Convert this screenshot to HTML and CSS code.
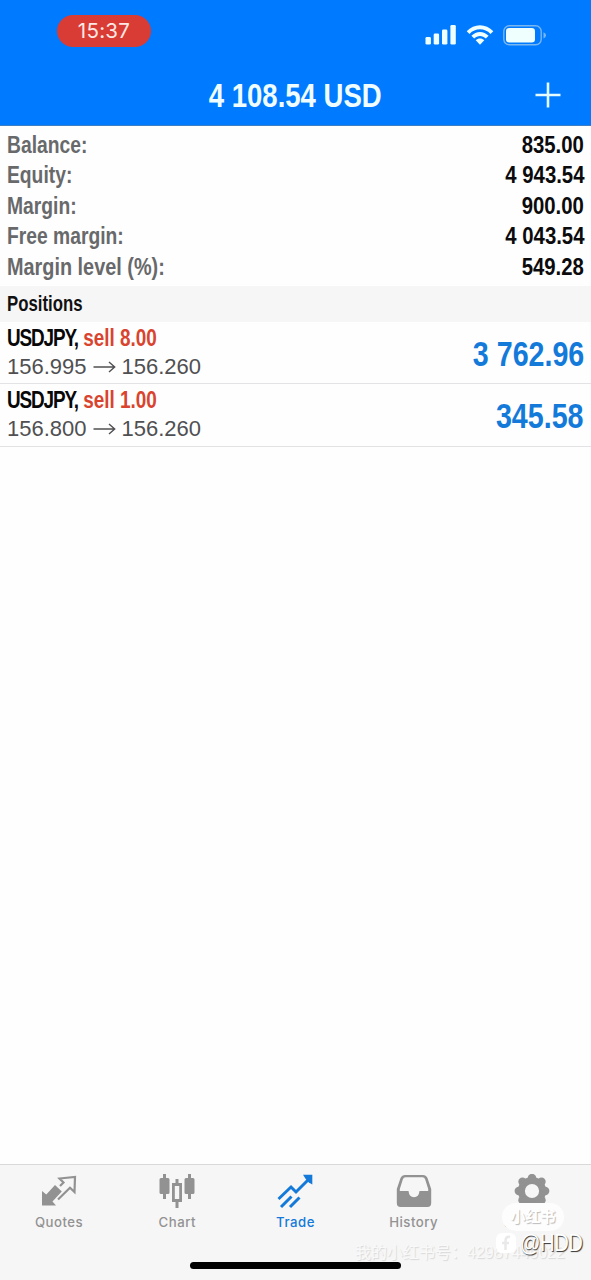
FILE: index.html
```html
<!DOCTYPE html>
<html lang="en">
<head>
<meta charset="utf-8">
<title>Trade</title>
<link rel="stylesheet" href="styles.css">
</head>
<body>
<div class="screen">
  <header class="header">
    <div class="status">
      <span class="clock">15:37</span>
      <div class="indicators">
        <svg class="signal" width="32" height="20" viewBox="0 0 32 20"><rect x="0.500" y="12" width="5.400" height="7.500" rx="1.300"/><rect x="8.700" y="8.500" width="5.400" height="11" rx="1.300"/><rect x="17" y="4.500" width="5.400" height="15" rx="1.300"/><rect x="25.400" y="0" width="5.400" height="19.500" rx="1.300"/></svg>
        <svg class="wifi" width="28" height="20" viewBox="0 0 28 20"><path d="M.7 6.2C8-1.800 20-1.800 27.300 6.200L24.500 9C18.800 2.800 9.200 2.800 3.500 9Z"/><path d="M5.400 10.800C10.300 5.600 17.700 5.600 22.600 10.800L19.800 13.600C16.600 10.200 11.400 10.200 8.200 13.600Z"/><path d="M9.700 15.200C12.200 12.900 15.800 12.900 18.300 15.200L14 19.700Z"/></svg>
        <svg class="battery" width="44" height="21" viewBox="0 0 44 21"><rect class="shell" x=".8" y=".8" width="37.400" height="19" rx="5.500"/><rect x="3" y="3" width="29" height="14.600" rx="3.300"/><path class="cap" d="M40.500 7.200Q43 8 43 10.300T40.500 13.500Z"/></svg>
      </div>
    </div>
    <div class="titlebar">
      <h1 class="title condensed">4 108.54 USD</h1>
      <svg class="plus" width="26" height="26" viewBox="0 0 26 26"><path d="M13 .5V25.500M.5 13H25.500"/></svg>
    </div>
  </header>

  <main class="content">
    <dl class="account">
      <div class="account-row"><dt class="condensed">Balance:</dt><dd class="condensed">835.00</dd></div>
      <div class="account-row"><dt class="condensed">Equity:</dt><dd class="condensed">4 943.54</dd></div>
      <div class="account-row"><dt class="condensed">Margin:</dt><dd class="condensed">900.00</dd></div>
      <div class="account-row"><dt class="condensed">Free margin:</dt><dd class="condensed">4 043.54</dd></div>
      <div class="account-row"><dt class="condensed wide">Margin level (%):</dt><dd class="condensed">549.28</dd></div>
    </dl>
    <h2 class="section"><span class="condensed">Positions</span></h2>
    <div class="position">
      <div class="order">
        <div class="deal condensed"><span class="symbol">USDJPY,</span> <span class="sell">sell 8.00</span></div>
        <div class="prices"><span>156.995</span><svg width="23" height="12" viewBox="0 0 23 12"><path d="M.5 6H21.500M16 1L21.700 6L16 11"/></svg><span>156.260</span></div>
      </div>
      <div class="profit condensed">3 762.96</div>
    </div>
    <div class="position">
      <div class="order">
        <div class="deal condensed"><span class="symbol">USDJPY,</span> <span class="sell">sell 1.00</span></div>
        <div class="prices"><span>156.800</span><svg width="23" height="12" viewBox="0 0 23 12"><path d="M.5 6H21.500M16 1L21.700 6L16 11"/></svg><span>156.260</span></div>
      </div>
      <div class="profit condensed">345.58</div>
    </div>
  </main>

  <footer class="footer">
    <nav class="tabs">
      <div class="tab">
        <svg width="36" height="36" viewBox="0 0 36 36"><path class="fill" d="M1 17L5.300 20.500L14 11L20.800 17.500L11.500 27.500L15 31.500H1Z"/><path class="line" d="M17 25.500L29 13.800L33.500 18L34 3L18.500 4.500L22.500 8.500L19 12"/></svg>
        <span>Quotes</span>
      </div>
      <div class="tab">
        <svg width="36" height="36" viewBox="0 0 36 36"><path class="fill" d="M4 0H7V4H9Q10.500 4 10.500 5.500V18.500Q10.500 20 9 20H7V25H4V20H2Q.5 20 .5 18.500V5.500Q.5 4 2 4H4ZM29 0H32V4H34Q35.500 4 35.500 5.500V18.500Q35.500 20 34 20H32V25H29V20H27Q25.500 20 25.500 18.500V5.500Q25.500 4 27 4H29Z"/><path class="fill" fill-rule="evenodd" d="M16.500 5H19.500V9H23V28H19.500V34H16.500V28H13V9H16.500ZM15.800 12V25H20.200V12Z"/></svg>
        <span>Chart</span>
      </div>
      <div class="tab active">
        <svg width="36" height="36" viewBox="0 0 36 36"><path class="thick" d="M1.500 25L14 13L19 18L32 5"/><path class="thick" d="M4 33L14.500 22.500M13 33L22.500 23.500"/><path class="fill" d="M26 .8H35.300V10.500L31.800 8.500L28.500 4.800Z"/></svg>
        <span>Trade</span>
      </div>
      <div class="tab">
        <svg width="36" height="36" viewBox="0 0 36 36"><path class="fill" fill-rule="evenodd" d="M9 1H27Q30 1 31.500 4L35.200 15V29Q35.200 33 31.500 33H4.500Q.8 33 .8 29V15L4.500 4Q6 1 9 1ZM9.500 3.300Q7.500 3.300 6.800 5.500L3.800 15V17H12.500Q13.200 23.200 18 23.200T23.500 17H32.200V15L29.200 5.500Q28.500 3.300 26.500 3.300Z"/></svg>
        <span>History</span>
      </div>
      <div class="tab">
        <svg width="36" height="36" viewBox="0 0 36 36"><circle class="ring" cx="18" cy="17" r="10.600"/><g class="fill"><circle cx="18" cy="4" r="4.200"/><circle cx="27.500" cy="7.800" r="4.200"/><circle cx="31.200" cy="17" r="4.200"/><circle cx="27.500" cy="26.200" r="4.200"/><circle cx="18" cy="30" r="4.200"/><circle cx="8.500" cy="26.200" r="4.200"/><circle cx="4.800" cy="17" r="4.200"/><circle cx="8.500" cy="7.800" r="4.200"/></g></svg>
        <span>Settings</span>
      </div>
    </nav>
    <div class="home-indicator"></div>
    <div class="account-mark">我的小红书号：42987440022</div>
    <div class="brand-mark">小红书</div>
    <div class="user-mark"><svg width="20" height="20" viewBox="0 0 20 20"><rect width="20" height="20" rx="6"/><path d="M14 4Q9.500 3 9.500 8V17M6 10H13"/></svg><span>@HDD</span></div>
  </footer>
</div>
</body>
</html>
```
FILE: styles.css
```css
* { box-sizing: border-box; }
body { margin: 0; background: #fff; font-family: "Liberation Sans", Arial, sans-serif; }
h1, h2, dl, dd { margin: 0; }
svg { display: block; flex: none; }

.screen { width: 591px; height: 1280px; display: flex; flex-direction: column; background: #fefefe; overflow: hidden; }
.condensed { font-weight: 700; white-space: nowrap; transform: scaleX(.82); transform-origin: left center; }

.header { height: 126px; background: #007aff; border-bottom: 1px solid #3c7fc4; flex: none; }
.status { height: 66px; padding: 15px 44px 0 57px; display: flex; justify-content: space-between; align-items: flex-start; }
.clock { width: 94px; height: 32px; border-radius: 16px; background: #d93c34; color: #ffe9e4; font: 400 20.500px/32px Inter, sans-serif; letter-spacing: .300px; text-align: center; }
.indicators { display: flex; gap: 9px; padding-top: 10px; fill: #effffe; }
.shell { fill: none; stroke: #79b6ef; stroke-width: 1.400; }
.cap { fill: #79b6ef; }
.titlebar { height: 60px; display: grid; grid-template-columns: 1fr auto 1fr; align-items: center; padding: 0 30px; }
.title { grid-column: 2; color: #effdff; font-size: 33.500px; line-height: 60px; transform: scaleX(.822); transform-origin: center; }
.plus { justify-self: end; fill: none; stroke: #e4fbff; stroke-width: 2.600; margin-top: -2px; }

.content { flex: 1; }
.account { height: 160px; padding: 4px 7px 0; }
.account-row { height: 30.400px; display: flex; justify-content: space-between; line-height: 30.400px; font-size: 23.500px; }
.account dt { color: #68696b; }
.account .wide { transform: scaleX(.845); }
.account dd { color: #0b0b0d; transform: scaleX(.865); transform-origin: right center; }
.section { height: 36px; padding: 0 7px; background: #f6f6f7; color: #111; font-size: 21.500px; line-height: 36px; }
.section .condensed { display: inline-block; transform: scaleX(.78); }
.position { height: 62.300px; padding: 0 7px; display: flex; justify-content: space-between; border-bottom: 1.500px solid #e3e3e5; }
.deal { font-size: 23.500px; line-height: 30px; margin-top: 1px; color: #080808; transform: scaleX(.805); }
.symbol { letter-spacing: -1.400px; }
.sell { color: #d9442f; }
.prices { display: flex; align-items: center; gap: 6px; color: #505052; font-size: 22px; line-height: 27px; }
.prices svg { fill: none; stroke: #505052; stroke-width: 1.400; }
.profit { color: #147ada; font-size: 34.500px; line-height: 65px; transform: scaleX(.83); transform-origin: right center; }

.footer { position: relative; height: 116px; background: #f6f6f6; border-top: 1px solid #d9d9da; flex: none; }
.tabs { display: grid; grid-template-columns: repeat(5, 1fr); padding-top: 9px; }
.tab { display: flex; flex-direction: column; align-items: center; gap: 4px; color: #929292; font: 500 13.200px/17px Inter, sans-serif; letter-spacing: .500px; }
.active { color: #147ada; }
.fill { fill: currentColor; }
.line { fill: none; stroke: currentColor; stroke-width: 2.200; }
.thick { fill: none; stroke: currentColor; stroke-width: 3; }
.ring { fill: none; stroke: currentColor; stroke-width: 7; }
.home-indicator { position: absolute; left: 190px; top: 97px; width: 211px; height: 7px; border-radius: 4px; background: #000; }
.account-mark { position: absolute; left: 355px; top: 77px; width: 215px; color: #f9f9f9; font: 16px/22px "Liberation Sans", "Noto Sans CJK SC", sans-serif; white-space: nowrap; text-shadow: 1px 1px 1px #d8d8d8; }
.brand-mark { position: absolute; left: 502px; top: 38px; width: 62px; height: 28px; border-radius: 14px; background: #fdfdfd; color: #fff; font: 700 15px/26px "Noto Sans CJK SC", sans-serif; text-align: center; text-shadow: 1px 1px 1px #bbb; }
.user-mark { position: absolute; left: 496px; top: 64px; display: flex; align-items: center; gap: 4px; color: #fff; font-size: 24px; line-height: 27px; text-shadow: 1px 1px 1px #333; }
.user-mark span { transform: scaleX(.84); transform-origin: left center; letter-spacing: -.500px; }
.user-mark rect { fill: #fff; }
.user-mark path { fill: none; stroke: #e9e9e9; stroke-width: 2.500; }
```
